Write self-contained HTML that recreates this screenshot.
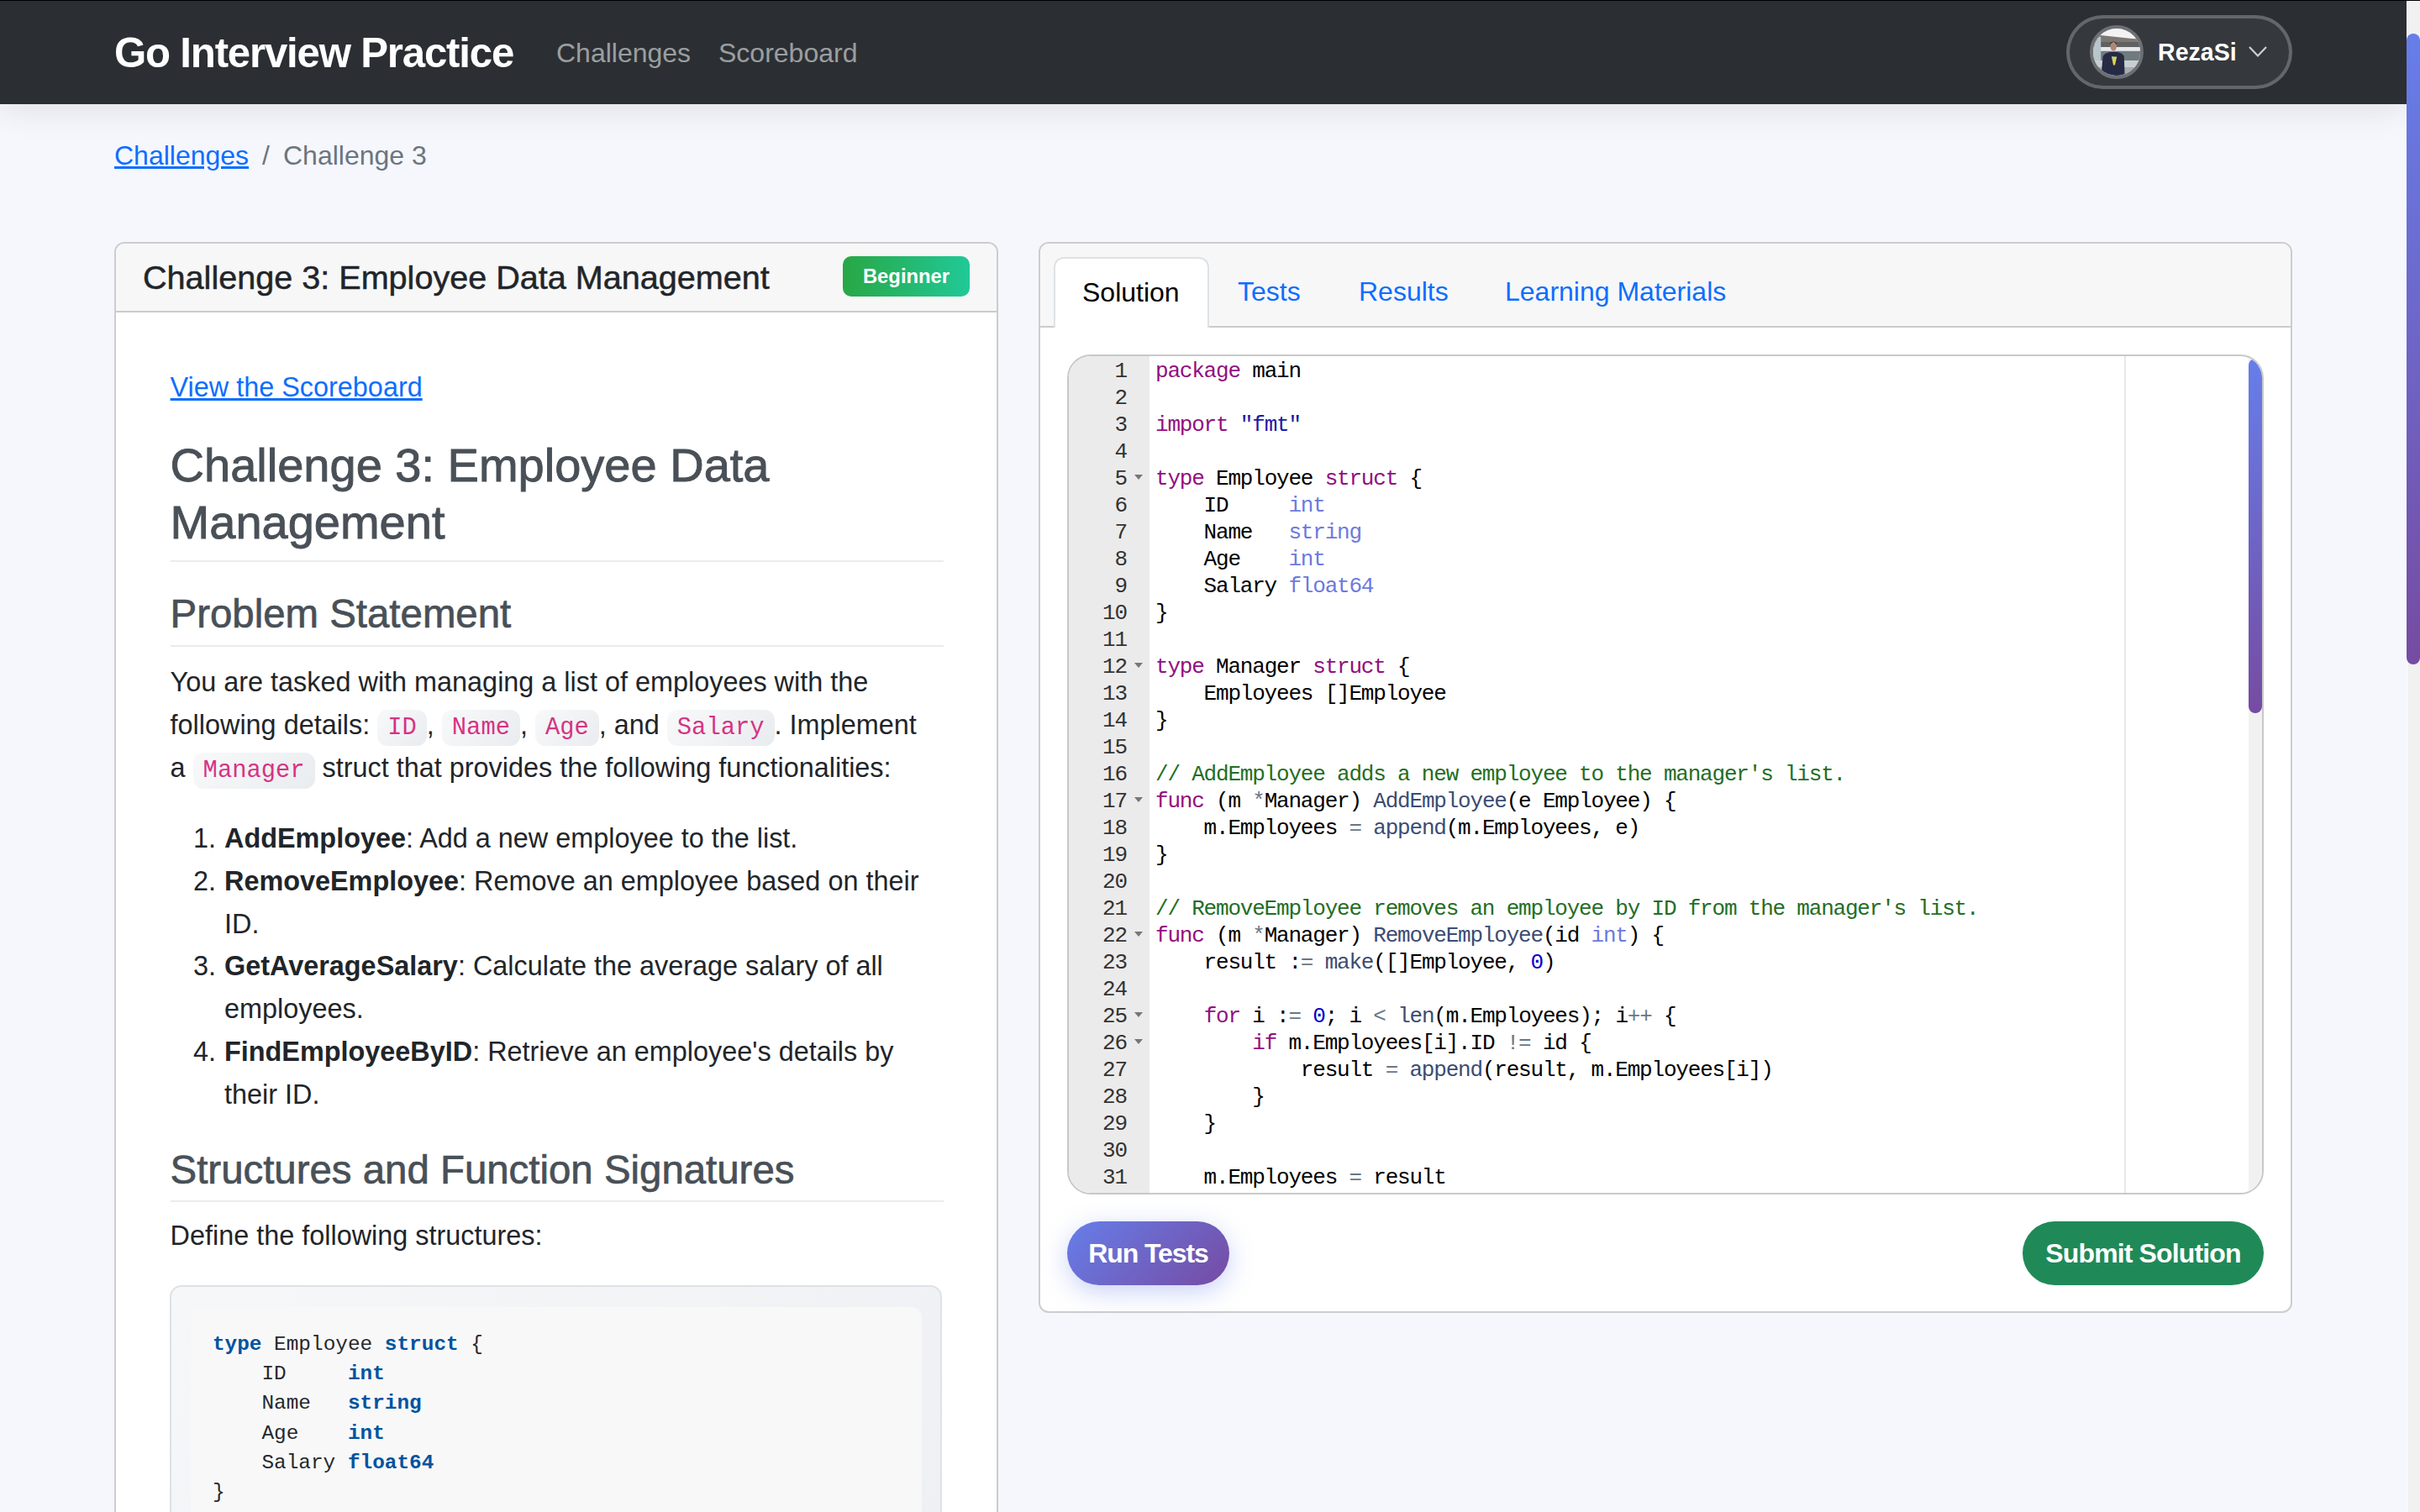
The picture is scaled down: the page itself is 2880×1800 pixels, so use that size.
<!DOCTYPE html>
<html>
<head>
<meta charset="utf-8">
<style>
html,body{margin:0;padding:0;}
html{overflow:hidden;}
@media (min-width:2000px){ html{zoom:2;} }
body{width:1440px;height:900px;position:relative;overflow:hidden;font-family:"Liberation Sans",sans-serif;color:#212529;background:#f5f7fd;}
*{box-sizing:border-box;}
.abs{position:absolute;}
#hdr{position:absolute;left:0;top:0;width:1432px;height:62px;background:#2b2f33;box-shadow:0 2px 20px rgba(0,0,0,.11);}
#topline{position:absolute;left:0;top:0;width:1440px;height:.5px;background:#000;z-index:5;}
#brand{position:absolute;left:68px;top:17.5px;font-weight:700;font-size:24.6px;letter-spacing:-.6px;color:#fff;white-space:nowrap;line-height:28px;}
.navl{position:absolute;top:23.5px;font-size:16px;line-height:16px;color:rgba(255,255,255,.55);white-space:nowrap;}
#user{position:absolute;left:1229.5px;top:9px;width:134.5px;height:44px;border:2px solid rgba(255,255,255,.23);border-radius:22px;background:rgba(255,255,255,.05);}
#avatar{position:absolute;left:12px;top:4px;width:32px;height:32px;border-radius:50%;border:2px solid #6c7075;overflow:hidden;background:#bbb;}
#uname{position:absolute;left:52.5px;top:12px;font-size:14.3px;line-height:16px;font-weight:700;color:#fff;white-space:nowrap;}
#chev{position:absolute;left:1446px;}
#sbtrack{position:absolute;left:1432px;top:0;width:8px;height:900px;background:#f1f1f1;border-left:.5px solid #fff;}
#sbthumb{position:absolute;left:1432px;top:20px;width:8px;height:375.5px;border-radius:4px;background:linear-gradient(180deg,#667eea,#764ba2);}
#crumb{position:absolute;left:68px;top:80.4px;font-size:16px;line-height:24px;white-space:nowrap;color:#6c757d;}
#crumb a{color:#0d6efd;text-decoration:underline;}
.card{position:absolute;background:#fff;border:1px solid #cdcdcd;border-radius:6px;}
#lcard{left:68px;top:144px;width:526px;height:800px;}
#lhead{position:absolute;left:0;top:0;right:0;height:41px;background:#f7f7f7;border-bottom:1px solid rgba(0,0,0,.175);border-radius:5px 5px 0 0;}
#ltitle{position:absolute;left:16px;top:8px;font-size:19.8px;line-height:24px;white-space:nowrap;color:#212529;-webkit-text-stroke:.25px #212529;}
#badge{position:absolute;left:432.5px;top:7.5px;width:75.5px;height:24px;border-radius:5px;background:linear-gradient(90deg,#28a745,#20c997);color:#fff;font-weight:700;font-size:11.9px;line-height:24px;text-align:center;}
.md{position:absolute;left:32.3px;width:460px;white-space:nowrap;}
.md a{color:#0d6efd;text-decoration:underline;}
.h1{font-size:28px;line-height:34px;color:#495057;-webkit-text-stroke:.45px #495057;}
.h2{font-size:23.7px;line-height:29px;color:#495057;-webkit-text-stroke:.35px #495057;}
.rule{position:absolute;left:32.3px;width:460px;height:1px;background:#e9ecef;}
.p{font-size:16.2px;line-height:25.4px;color:#212529;}
code.ic{font-family:"Liberation Mono",monospace;font-size:14.4px;line-height:1;color:#d63384;background:linear-gradient(135deg,#f8f9fa,#e9ecef);border-radius:6px;padding:2.6px 6px;}
ol{margin:0;padding:0;list-style:none;}
.li{position:relative;}
.num{position:absolute;left:-18.5px;}
#pre{position:absolute;left:31.8px;top:619.85px;width:459.7px;height:300px;border:1px solid #dee2e6;border-radius:7px;background:linear-gradient(135deg,#f6f7f9,#eceef1);}
#preinner{position:absolute;left:11.5px;top:12px;width:435px;height:300px;background:#f8f8f8;border-radius:6px;}
#precode{position:absolute;left:24.65px;top:25.7px;font-family:"Liberation Mono",monospace;font-size:12.2px;line-height:17.6px;color:#24292e;white-space:pre;}
.hk{color:#00539f;font-weight:700;}
#rcard{left:618px;top:144px;width:746px;height:637.5px;}
#rhead{position:absolute;left:0;top:0;right:0;height:50px;background:#f7f7f7;border-bottom:1px solid rgba(0,0,0,.175);border-radius:5px 5px 0 0;}
.tab{position:absolute;top:8.5px;height:41.5px;font-size:16px;line-height:24px;padding:8px 16px;color:#0d6efd;white-space:nowrap;}
.tab.act{top:8px;height:42px;color:#000;background:#fff;border:1px solid #dee2e6;border-bottom:none;border-radius:6px 6px 0 0;padding:8px 15px 8px 16px;width:92.4px;}
#editor{position:absolute;left:16px;top:66px;width:712px;height:500px;border:1px solid #c8c8c8;border-radius:14px;overflow:hidden;background:#fff;}
#gutter{position:absolute;left:0;top:0;width:47.9px;height:100%;background:#ebebeb;}
#lines{position:absolute;left:0;top:1.1px;width:100%;}
.ln{position:absolute;left:0;width:47.4px;height:16px;text-align:right;padding-right:13px;font-family:"Liberation Mono",monospace;font-size:13px;letter-spacing:-.6px;line-height:16px;color:#333;}
.fw{position:absolute;left:39px;width:0;height:0;border-left:2.5px solid transparent;border-right:2.5px solid transparent;border-top:3px solid #777;}
.cl{position:absolute;left:51.5px;height:16px;font-family:"Liberation Mono",monospace;font-size:13px;letter-spacing:-.6px;line-height:16px;color:#000;white-space:pre;}
.k{color:#930f80}.s{color:#1a1aa6}.t{color:#6d79de}.c{color:#236e24}.n{color:#0000cd}.f{color:#3c4c72}.o{color:#687687}
#pmargin{position:absolute;left:628px;top:0;width:1px;height:100%;background:#e8e8e8;}
#esb{position:absolute;left:702px;top:0;width:8px;height:100%;background:#f1f1f1;}
#esbthumb{position:absolute;left:702px;top:1.5px;width:8px;height:211px;border-radius:4px;background:linear-gradient(180deg,#667eea,#764ba2);}
#runbtn{position:absolute;left:16px;top:582px;width:96.5px;height:38px;border-radius:19px;background:linear-gradient(135deg,#667eea,#764ba2);box-shadow:0 4px 15px rgba(102,126,234,.35);color:#fff;font-weight:700;font-size:16px;letter-spacing:-.55px;line-height:38px;text-align:center;white-space:nowrap;}
#subbtn{position:absolute;left:584.5px;top:582px;width:143.5px;height:38px;border-radius:19px;background:#1f8a58;color:#fff;font-weight:700;font-size:16px;letter-spacing:-.43px;line-height:38px;text-align:center;white-space:nowrap;}
</style>
</head>
<body>
<div id="hdr">
  <div id="brand">Go Interview Practice</div>
  <div class="navl" style="left:331px">Challenges</div>
  <div class="navl" style="left:427.5px">Scoreboard</div>
  <div id="user">
    <div id="avatar">
      <svg width="28" height="28" viewBox="0 0 28 28">
        <rect width="28" height="28" fill="#b4b6b6"/>
        <rect x="0" y="0" width="28" height="6" fill="#f2f2f2"/>
        <path d="M0 3.5 L28 6.5 L28 11 L0 8 Z" fill="#7d7773"/>
        <path d="M0 8 L28 11 L28 11.2 L0 11.2 Z" fill="#5d5d5e"/>
        <rect x="4.5" y="8" width="23.5" height="3.2" fill="#5f6163"/>
        <rect x="4.5" y="11" width="23.5" height="2.6" fill="#e6e8ea"/>
        <rect x="4.5" y="13.4" width="23.5" height="5.8" fill="#6f7b7e"/>
        <rect x="0" y="5" width="4.6" height="18" fill="#b8c6cb"/>
        <rect x="0" y="19" width="28" height="4" fill="#c9cfd0"/>
        <rect x="0" y="23" width="28" height="5" fill="#a9acad"/>
        <ellipse cx="12.1" cy="10.6" rx="1.9" ry="2.7" fill="#b08874"/>
        <path d="M10.2 9.5 Q12.1 6.6 14 9.5 L14 8.6 Q12.1 6.9 10.2 8.6 Z" fill="#2a2320"/>
        <path d="M4.8 28 L5.8 16.5 Q7 14.6 10 14 L14.3 14 Q17.5 14.6 18.4 16.5 L18.8 28 Z" fill="#272a45"/>
        <path d="M11 16.8 L14.1 16.8 L13 21.8 L12 21.8 Z" fill="#e6d34a"/>
        <path d="M11 16.8 L12.2 16.8 L12.3 20 Z" fill="#7fd9d0"/>
      </svg>
    </div>
    <div id="uname">RezaSi</div>
    <svg class="abs" style="left:106px;top:16px" width="12" height="8" viewBox="0 0 12 8"><path d="M1 1 L6 6.2 L11 1" fill="none" stroke="#cfd0d2" stroke-width="1.1"/></svg>
  </div>
</div>
<div id="topline"></div>

<div id="crumb"><a>Challenges</a><span style="padding:0 8px">/</span><span>Challenge 3</span></div>

<div class="card" id="lcard">
  <div id="lhead">
    <div id="ltitle">Challenge 3: Employee Data Management</div>
    <div id="badge">Beginner</div>
  </div>
  <div class="md p" style="top:73.5px;line-height:24px;font-size:16.2px"><a>View the Scoreboard</a></div>
  <div class="md h1" style="top:115px">Challenge 3: Employee Data<br>Management</div>
  <div class="rule" style="top:188.3px"></div>
  <div class="md h2" style="top:206px">Problem Statement</div>
  <div class="rule" style="top:238.8px"></div>
  <div class="md p" style="top:248.6px">You are tasked with managing a list of employees with the<br>following details: <code class="ic">ID</code>, <code class="ic">Name</code>, <code class="ic">Age</code>, and <code class="ic">Salary</code>. Implement<br>a <code class="ic">Manager</code> struct that provides the following functionalities:</div>
  <div class="md p" style="top:341.3px;left:64.5px;line-height:25.48px">
    <div class="li"><span class="num">1.</span><b>AddEmployee</b>: Add a new employee to the list.</div>
    <div class="li"><span class="num">2.</span><b>RemoveEmployee</b>: Remove an employee based on their</div>
    <div class="li">ID.</div>
    <div class="li"><span class="num">3.</span><b>GetAverageSalary</b>: Calculate the average salary of all</div>
    <div class="li">employees.</div>
    <div class="li"><span class="num">4.</span><b>FindEmployeeByID</b>: Retrieve an employee's details by</div>
    <div class="li">their ID.</div>
  </div>
  <div class="md h2" style="top:537px">Structures and Function Signatures</div>
  <div class="rule" style="top:569.5px"></div>
  <div class="md p" style="top:578px">Define the following structures:</div>
  <div id="pre"><div id="preinner"></div>
<div id="precode"><span class="hk">type</span> Employee <span class="hk">struct</span> {
    ID     <span class="hk">int</span>
    Name   <span class="hk">string</span>
    Age    <span class="hk">int</span>
    Salary <span class="hk">float64</span>
}</div>
  </div>
</div>

<div class="card" id="rcard">
  <div id="rhead">
    <div class="tab act" style="left:8px">Solution</div>
    <div class="tab" style="left:101.5px">Tests</div>
    <div class="tab" style="left:173.5px">Results</div>
    <div class="tab" style="left:260.5px">Learning Materials</div>
  </div>
  <div id="editor">
    <div id="gutter"></div>
    <div id="pmargin"></div>
    <div id="lines"><div class="ln" style="top:0px">1</div>
<div class="cl" style="top:0px"><span class="k">package</span> main</div>
<div class="ln" style="top:16px">2</div>
<div class="ln" style="top:32px">3</div>
<div class="cl" style="top:32px"><span class="k">import</span> <span class="s">"fmt"</span></div>
<div class="ln" style="top:48px">4</div>
<div class="ln" style="top:64px">5</div>
<div class="fw" style="top:69.6px"></div>
<div class="cl" style="top:64px"><span class="k">type</span> Employee <span class="k">struct</span> {</div>
<div class="ln" style="top:80px">6</div>
<div class="cl" style="top:80px">    ID     <span class="t">int</span></div>
<div class="ln" style="top:96px">7</div>
<div class="cl" style="top:96px">    Name   <span class="t">string</span></div>
<div class="ln" style="top:112px">8</div>
<div class="cl" style="top:112px">    Age    <span class="t">int</span></div>
<div class="ln" style="top:128px">9</div>
<div class="cl" style="top:128px">    Salary <span class="t">float64</span></div>
<div class="ln" style="top:144px">10</div>
<div class="cl" style="top:144px">}</div>
<div class="ln" style="top:160px">11</div>
<div class="ln" style="top:176px">12</div>
<div class="fw" style="top:181.6px"></div>
<div class="cl" style="top:176px"><span class="k">type</span> Manager <span class="k">struct</span> {</div>
<div class="ln" style="top:192px">13</div>
<div class="cl" style="top:192px">    Employees []Employee</div>
<div class="ln" style="top:208px">14</div>
<div class="cl" style="top:208px">}</div>
<div class="ln" style="top:224px">15</div>
<div class="ln" style="top:240px">16</div>
<div class="cl" style="top:240px"><span class="c">// AddEmployee adds a new employee to the manager's list.</span></div>
<div class="ln" style="top:256px">17</div>
<div class="fw" style="top:261.6px"></div>
<div class="cl" style="top:256px"><span class="k">func</span> (m <span class="o">*</span>Manager) <span class="f">AddEmployee</span>(e Employee) {</div>
<div class="ln" style="top:272px">18</div>
<div class="cl" style="top:272px">    m.Employees <span class="o">=</span> <span class="f">append</span>(m.Employees, e)</div>
<div class="ln" style="top:288px">19</div>
<div class="cl" style="top:288px">}</div>
<div class="ln" style="top:304px">20</div>
<div class="ln" style="top:320px">21</div>
<div class="cl" style="top:320px"><span class="c">// RemoveEmployee removes an employee by ID from the manager's list.</span></div>
<div class="ln" style="top:336px">22</div>
<div class="fw" style="top:341.6px"></div>
<div class="cl" style="top:336px"><span class="k">func</span> (m <span class="o">*</span>Manager) <span class="f">RemoveEmployee</span>(id <span class="t">int</span>) {</div>
<div class="ln" style="top:352px">23</div>
<div class="cl" style="top:352px">    result :<span class="o">=</span> <span class="f">make</span>([]Employee, <span class="n">0</span>)</div>
<div class="ln" style="top:368px">24</div>
<div class="ln" style="top:384px">25</div>
<div class="fw" style="top:389.6px"></div>
<div class="cl" style="top:384px">    <span class="k">for</span> i :<span class="o">=</span> <span class="n">0</span>; i <span class="o">&lt;</span> <span class="f">len</span>(m.Employees); i<span class="o">++</span> {</div>
<div class="ln" style="top:400px">26</div>
<div class="fw" style="top:405.6px"></div>
<div class="cl" style="top:400px">        <span class="k">if</span> m.Employees[i].ID <span class="o">!=</span> id {</div>
<div class="ln" style="top:416px">27</div>
<div class="cl" style="top:416px">            result <span class="o">=</span> <span class="f">append</span>(result, m.Employees[i])</div>
<div class="ln" style="top:432px">28</div>
<div class="cl" style="top:432px">        }</div>
<div class="ln" style="top:448px">29</div>
<div class="cl" style="top:448px">    }</div>
<div class="ln" style="top:464px">30</div>
<div class="ln" style="top:480px">31</div>
<div class="cl" style="top:480px">    m.Employees <span class="o">=</span> result</div></div>
    <div id="esb"></div>
    <div id="esbthumb"></div>
  </div>
  <div id="runbtn">Run Tests</div>
  <div id="subbtn">Submit Solution</div>
</div>

<div id="sbtrack"></div>
<div id="sbthumb"></div>
</body>
</html>
